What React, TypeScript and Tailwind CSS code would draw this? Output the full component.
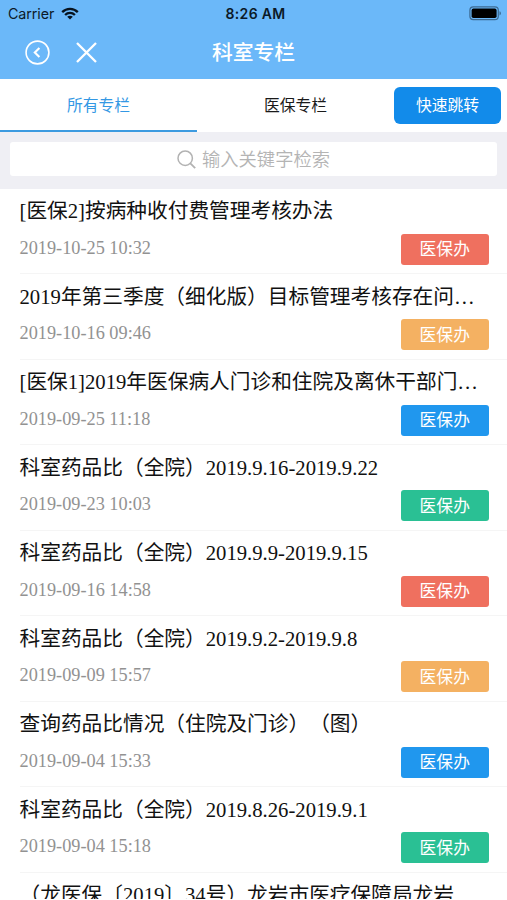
import clsx from "clsx";

interface Notice {
  title: string;
  date?: string;
  tag?: string;
  color?: string;
}

const RED = "bg-[#ef705f]";
const ORANGE = "bg-[#f4b162]";
const BLUE = "bg-[#2097ee]";
const GREEN = "bg-[#2ac094]";

const notices: Notice[] = [
  { title: "[医保2]按病种收付费管理考核办法", date: "2019-10-25 10:32", tag: "医保办", color: RED },
  { title: "2019年第三季度（细化版）目标管理考核存在问…", date: "2019-10-16 09:46", tag: "医保办", color: ORANGE },
  { title: "[医保1]2019年医保病人门诊和住院及离休干部门…", date: "2019-09-25 11:18", tag: "医保办", color: BLUE },
  { title: "科室药品比（全院）2019.9.16-2019.9.22", date: "2019-09-23 10:03", tag: "医保办", color: GREEN },
  { title: "科室药品比（全院）2019.9.9-2019.9.15", date: "2019-09-16 14:58", tag: "医保办", color: RED },
  { title: "科室药品比（全院）2019.9.2-2019.9.8", date: "2019-09-09 15:57", tag: "医保办", color: ORANGE },
  { title: "查询药品比情况（住院及门诊）（图）", date: "2019-09-04 15:33", tag: "医保办", color: BLUE },
  { title: "科室药品比（全院）2019.8.26-2019.9.1", date: "2019-09-04 15:18", tag: "医保办", color: GREEN },
  { title: "（龙医保〔2019〕34号）龙岩市医疗保障局龙岩" },
];

function StatusBar() {
  return (
    <div className="flex h-[27px] items-center justify-between pl-2 pr-[5px] font-['Inter','Liberation_Sans',sans-serif] text-[#0b1a28]">
      <div className="flex w-40 items-center gap-[7px]">
        <span className="text-[14.3px] tracking-[-0.1px]">Carrier</span>
        <svg width="18" height="13" viewBox="0 0 18 13" fill="none" stroke="#07131f" strokeWidth="2.3">
          <path d="M1.2 5.1C5.6 0.7 12.4 0.7 16.8 5.1" />
          <path d="M4.1 8C6.9 5.2 11.1 5.2 13.9 8" />
          <path d="M9 12.6L6.2 9.8C7.8 8.3 10.2 8.3 11.8 9.8Z" fill="#07131f" stroke="none" />
        </svg>
      </div>
      <span className="pl-px text-[14px] font-semibold tracking-[0.3px]">8:26 AM</span>
      <div className="flex w-40 justify-end">
        <svg width="33" height="15" viewBox="0 0 33 15">
          <rect x="0.9" y="0.9" width="28.4" height="12.8" rx="3.4" fill="none" stroke="#3c6a92" strokeWidth="1.2" />
          <rect x="2.6" y="2.6" width="25" height="9.4" rx="1.8" fill="#000" />
          <path d="M30.5 5.2C32.4 5.8 32.4 8.8 30.5 9.4Z" fill="#3c6a92" />
        </svg>
      </div>
    </div>
  );
}

function NavBar() {
  return (
    <div className="grid h-[52px] grid-cols-[1fr_auto_1fr] items-center pb-0.5">
      <div className="flex items-center gap-[26px] pl-[25px]">
        <svg width="25" height="25" viewBox="0 0 25 25" fill="none" stroke="#fff">
          <circle cx="12.5" cy="12.5" r="11.4" strokeWidth="1.6" />
          <path d="M14.4 8L9.8 12.5L14.4 17" strokeWidth="2.1" />
        </svg>
        <svg width="21" height="21" viewBox="0 0 21 21" fill="none" stroke="#fff" strokeWidth="2.3">
          <path d="M1 1L20 20M20 1L1 20" />
        </svg>
      </div>
      <h1 className="pb-px text-[20.8px] leading-none font-medium text-white">科室专栏</h1>
    </div>
  );
}

function Tabs() {
  return (
    <div className="flex h-[53px] bg-white text-[15.8px]">
      <div className="flex w-[197px] items-center justify-center border-b-2 border-[#3d9be0] pt-px text-[#3398e4]">
        所有专栏
      </div>
      <div className="flex w-[197px] items-center justify-center border-b-2 border-white pt-px text-[#1a1a1a]">
        医保专栏
      </div>
      <div className="flex flex-1 items-center pb-px pr-1.5">
        <button className="h-[37px] w-full rounded-md bg-[#128bea] text-white">快速跳转</button>
      </div>
    </div>
  );
}

function SearchBar() {
  return (
    <div className="h-[56.5px] bg-[#efeff4] px-2.5 pt-2.5">
      <div className="flex h-[34px] items-center justify-center gap-1.5 rounded-[3px] bg-white text-[18.3px] text-[#b4b4b4]">
        <svg width="19" height="19" viewBox="0 0 19 19" fill="none" stroke="#b2b2b2" strokeWidth="1.5">
          <circle cx="8.2" cy="8.2" r="7.2" />
          <path d="M13.3 13.3L18.2 18.2" strokeWidth="1.8" />
        </svg>
        <span className="font-[350]">输入关键字检索</span>
      </div>
    </div>
  );
}

function NoticeRow({ title, date, tag, color }: Notice) {
  return (
    <li className="ml-[19.5px] h-[85.5px] border-b border-[#f5f5f5] pr-[18px] pt-[7.5px]">
      <div className="h-[30px] text-[20.7px] leading-[30px] whitespace-nowrap text-[#111] [text-spacing-trim:space-all]">
        {title}
      </div>
      {date && (
        <div className="flex items-start justify-between pt-[7.5px]">
          <span className="text-[18.3px] leading-7 text-[#929292]">{date}</span>
          <span
            className={clsx(
              "flex h-[31px] w-[88.5px] items-center justify-center rounded-[3px] font-['Noto_Sans_CJK_SC',sans-serif] text-[16.8px] text-white",
              color
            )}
          >
            {tag}
          </span>
        </div>
      )}
    </li>
  );
}

export default function App() {
  return (
    <div className="flex h-[900px] w-[507px] flex-col overflow-hidden bg-white font-['Noto_Sans_CJK_SC',sans-serif]">
      <header className="shrink-0 bg-[#6bb8f9]">
        <StatusBar />
        <NavBar />
      </header>
      <div className="shrink-0">
        <Tabs />
        <SearchBar />
      </div>
      <ul className="h-[710.5px] overflow-hidden font-['Liberation_Serif','Noto_Sans_CJK_SC',serif]">
        {notices.map((notice) => (
          <NoticeRow key={notice.title} {...notice} />
        ))}
      </ul>
    </div>
  );
}
